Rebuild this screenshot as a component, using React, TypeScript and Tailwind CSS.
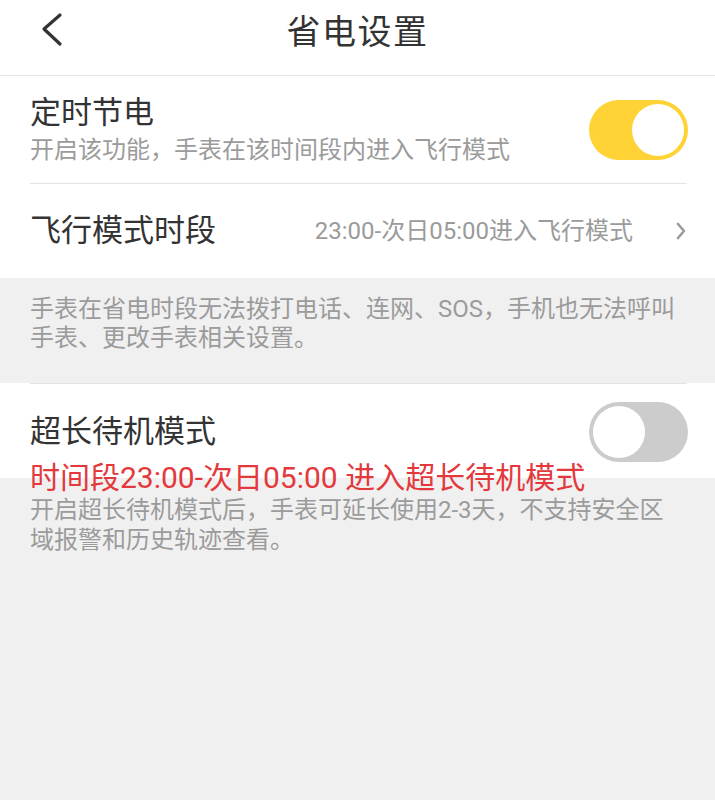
const font = { fontFamily: '"Roboto", "Noto Sans CJK SC", sans-serif' };

function Toggle({ on }: { on: boolean }) {
  return (
    <div
      className={`flex h-[60px] w-[99px] shrink-0 items-center rounded-full p-[4px] ${
        on ? "justify-end bg-[#ffd236]" : "justify-start bg-[#cccccc]"
      }`}
    >
      <div className="h-[52px] w-[52px] rounded-full bg-white" />
    </div>
  );
}

export default function App() {
  return (
    <div className="min-h-[800px] w-[715px] bg-[#f0f0f0] text-[#333333]" style={font}>
      {/* Header */}
      <header className="relative flex h-[76px] items-center justify-center border-b border-[#e6e6e6] bg-white pb-[12px]">
        <svg
          className="absolute left-[40px] top-[12px]"
          width="26"
          height="36"
          viewBox="0 0 26 36"
          fill="none"
          stroke="#333333"
          strokeWidth="3.2"
          strokeLinecap="round"
          strokeLinejoin="round"
        >
          <polyline points="20,3 4,17 20,32" />
        </svg>
        <h1 className="text-[34px] leading-none tracking-[1.5px]">省电设置</h1>
      </header>

      {/* Timed saving */}
      <section className="bg-white">
        <div className="flex h-[107px] items-center justify-between pl-[30px] pr-[27px]">
          <div className="flex flex-col">
            <span className="text-[31px] leading-[36px]">定时节电</span>
            <span className="mt-[5px] text-[24px] leading-[28px] text-[#9b9b9b]">
              开启该功能，手表在该时间段内进入飞行模式
            </span>
          </div>
          <Toggle on />
        </div>
        <div className="mx-[30px] mr-[28px] border-t border-[#e4e4e4]" />
        <div className="flex h-[94px] items-center pl-[30px] pr-[28px]">
          <span className="flex-1 text-[31px] leading-[36px]">飞行模式时段</span>
          <span className="text-[24px] text-[#9b9b9b]">23:00-次日05:00进入飞行模式</span>
          <svg
            className="ml-[42px]"
            width="12"
            height="20"
            viewBox="0 0 12 20"
            fill="none"
            stroke="#9b9b9b"
            strokeWidth="2.6"
            strokeLinecap="round"
            strokeLinejoin="round"
          >
            <polyline points="3,3 9,10 3,17" />
          </svg>
        </div>
      </section>

      {/* Note */}
      <p className="h-[105px] px-[30px] pt-[17px] text-[24px] leading-[29px] text-[#9b9b9b]">
        手表在省电时段无法拨打电话、连网、SOS，手机也无法呼叫手表、更改手表相关设置。
      </p>

      {/* Long standby */}
      <section className="bg-white">
        <div className="mx-[30px] mr-[28px] border-t border-[#e4e4e4]" />
        <div className="flex h-[94px] items-start justify-between pl-[30px] pr-[27px] pt-[18px]">
          <span className="mt-[12px] text-[31px] leading-[36px]">超长待机模式</span>
          <Toggle on={false} />
        </div>
      </section>
      <div className="-mt-[17px] pl-[30px] pr-[40px]">
        <p className="text-[30px] leading-[34px] text-[#e4393c]">时间段23:00-次日05:00 进入超长待机模式</p>
        <p className="text-[24px] leading-[30px] text-[#9b9b9b]">
          开启超长待机模式后，手表可延长使用2-3天，不支持安全区域报警和历史轨迹查看。
        </p>
      </div>
    </div>
  );
}
